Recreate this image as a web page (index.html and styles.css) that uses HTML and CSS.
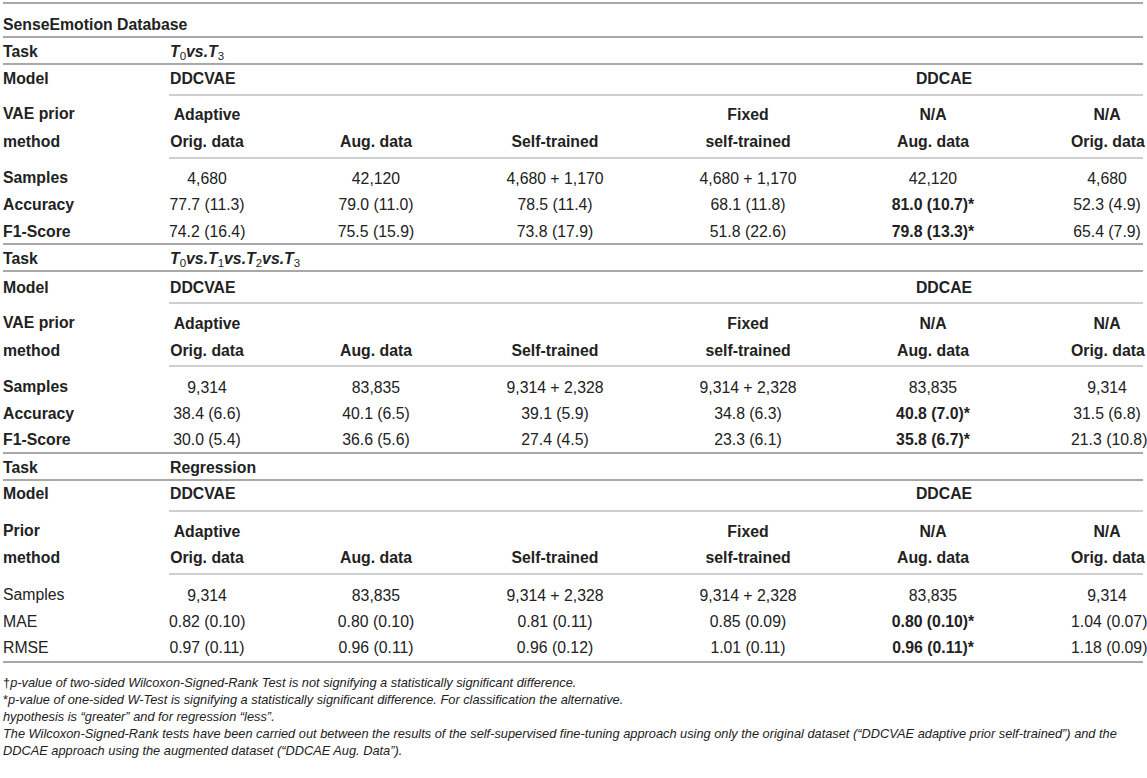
FILE: index.html
```html
<!DOCTYPE html>
<html>
<head>
<meta charset="utf-8">
<link rel="stylesheet" href="styles.css">
</head>
<body>
<div class="page">
<table class="tbl">
  <colgroup>
    <col class="w1"><col class="w2"><col class="w3"><col class="w4"><col class="w5"><col class="w6"><col class="w7">
  </colgroup>
  <tbody>
    <tr class="r-title line"><td colspan="7" class="b">SenseEmotion Database</td></tr>

    <!-- Block 1 -->
    <tr class="r-task line"><td class="b">Task</td><td colspan="6" class="b span"><span class="task"><i>T</i><sub>0</sub><i>vs.T</i><sub>3</sub></span></td></tr>
    <tr class="r-model"><td class="b">Model</td><td colspan="4" class="b span pl">DDCVAE</td><td class="b pl ddcae">DDCAE</td><td class="b pl"></td></tr>
    <tr class="r-prior"><td class="b">VAE prior</td><td class="b c2">Adaptive</td><td class="c3"></td><td class="c4"></td><td class="b c5">Fixed</td><td class="b c6">N/A</td><td class="b c7">N/A</td></tr>
    <tr class="r-method"><td class="b">method</td><td class="b c2 pl">Orig. data</td><td class="b c3 pl">Aug. data</td><td class="b c4 pl">Self-trained</td><td class="b c5 pl">self-trained</td><td class="b c6 pl">Aug. data</td><td class="b c7 pl">Orig. data</td></tr>
    <tr class="r-samples"><td class="b">Samples</td><td class="c2">4,680</td><td class="c3">42,120</td><td class="c4">4,680 + 1,170</td><td class="c5">4,680 + 1,170</td><td class="c6">42,120</td><td class="c7">4,680</td></tr>
    <tr class="r-mid"><td class="b">Accuracy</td><td class="c2">77.7 (11.3)</td><td class="c3">79.0 (11.0)</td><td class="c4">78.5 (11.4)</td><td class="c5">68.1 (11.8)</td><td class="c6 b">81.0 (10.7)*</td><td class="c7">52.3 (4.9)</td></tr>
    <tr class="r-last line"><td class="b">F1-Score</td><td class="c2">74.2 (16.4)</td><td class="c3">75.5 (15.9)</td><td class="c4">73.8 (17.9)</td><td class="c5">51.8 (22.6)</td><td class="c6 b">79.8 (13.3)*</td><td class="c7">65.4 (7.9)</td></tr>

    <!-- Block 2 -->
    <tr class="r-task line"><td class="b">Task</td><td colspan="6" class="b span"><span class="task"><i>T</i><sub>0</sub><i>vs.T</i><sub>1</sub><i>vs.T</i><sub>2</sub><i>vs.T</i><sub>3</sub></span></td></tr>
    <tr class="r-model2"><td class="b">Model</td><td colspan="4" class="b span pl">DDCVAE</td><td class="b pl ddcae">DDCAE</td><td class="b pl"></td></tr>
    <tr class="r-prior2"><td class="b">VAE prior</td><td class="b c2">Adaptive</td><td class="c3"></td><td class="c4"></td><td class="b c5">Fixed</td><td class="b c6">N/A</td><td class="b c7">N/A</td></tr>
    <tr class="r-method2"><td class="b">method</td><td class="b c2 pl">Orig. data</td><td class="b c3 pl">Aug. data</td><td class="b c4 pl">Self-trained</td><td class="b c5 pl">self-trained</td><td class="b c6 pl">Aug. data</td><td class="b c7 pl">Orig. data</td></tr>
    <tr class="r-samples2"><td class="b">Samples</td><td class="c2">9,314</td><td class="c3">83,835</td><td class="c4">9,314 + 2,328</td><td class="c5">9,314 + 2,328</td><td class="c6">83,835</td><td class="c7">9,314</td></tr>
    <tr class="r-mid2"><td class="b">Accuracy</td><td class="c2">38.4 (6.6)</td><td class="c3">40.1 (6.5)</td><td class="c4">39.1 (5.9)</td><td class="c5">34.8 (6.3)</td><td class="c6 b">40.8 (7.0)*</td><td class="c7">31.5 (6.8)</td></tr>
    <tr class="r-last2 line"><td class="b">F1-Score</td><td class="c2">30.0 (5.4)</td><td class="c3">36.6 (5.6)</td><td class="c4">27.4 (4.5)</td><td class="c5">23.3 (6.1)</td><td class="c6 b">35.8 (6.7)*</td><td class="c7">21.3 (10.8)</td></tr>

    <!-- Block 3 -->
    <tr class="r-task3 line"><td class="b">Task</td><td colspan="6" class="b span">Regression</td></tr>
    <tr class="r-model3"><td class="b">Model</td><td colspan="4" class="b span pl">DDCVAE</td><td class="b pl ddcae">DDCAE</td><td class="b pl"></td></tr>
    <tr class="r-prior3"><td class="b">Prior</td><td class="b c2">Adaptive</td><td class="c3"></td><td class="c4"></td><td class="b c5">Fixed</td><td class="b c6">N/A</td><td class="b c7">N/A</td></tr>
    <tr class="r-method3"><td class="b">method</td><td class="b c2 pl">Orig. data</td><td class="b c3 pl">Aug. data</td><td class="b c4 pl">Self-trained</td><td class="b c5 pl">self-trained</td><td class="b c6 pl">Aug. data</td><td class="b c7 pl">Orig. data</td></tr>
    <tr class="r-samples3"><td>Samples</td><td class="c2">9,314</td><td class="c3">83,835</td><td class="c4">9,314 + 2,328</td><td class="c5">9,314 + 2,328</td><td class="c6">83,835</td><td class="c7">9,314</td></tr>
    <tr class="r-mid3"><td>MAE</td><td class="c2">0.82 (0.10)</td><td class="c3">0.80 (0.10)</td><td class="c4">0.81 (0.11)</td><td class="c5">0.85 (0.09)</td><td class="c6 b">0.80 (0.10)*</td><td class="c7">1.04 (0.07)</td></tr>
    <tr class="r-last3 line"><td>RMSE</td><td class="c2">0.97 (0.11)</td><td class="c3">0.96 (0.11)</td><td class="c4">0.96 (0.12)</td><td class="c5">1.01 (0.11)</td><td class="c6 b">0.96 (0.11)*</td><td class="c7">1.18 (0.09)</td></tr>
  </tbody>
</table>
<div class="notes">
  <p><span class="up">†</span><i>p-value of two-sided Wilcoxon-Signed-Rank Test is not signifying a statistically significant difference.</i></p>
  <p><span class="up">*</span><i>p-value of one-sided W-Test is signifying a statistically significant difference. For classification the alternative.</i></p>
  <p><i>hypothesis is “greater” and for regression “less”.</i></p>
  <p><i>The Wilcoxon-Signed-Rank tests have been carried out between the results of the self-supervised fine-tuning approach using only the original dataset (“DDCVAE adaptive prior self-trained”) and the DDCAE approach using the augmented dataset (“DDCAE Aug. Data”).</i></p>
</div>
</div>
</body>
</html>
```
FILE: styles.css
```css
html, body {
  margin: 0;
  padding: 0;
  background: #ffffff;
}

.page {
  padding: 2px 4px 0 3px;
  width: 1140px;
  font-family: "Liberation Sans", Arial, Helvetica, sans-serif;
  color: #222222;
}

.tbl {
  width: 1140px;
  table-layout: fixed;
  border-collapse: collapse;
  border-top: 2px solid #a8a8a8;
  font-size: 15.8px;
}

.w1 { width: 166px; }
.w2 { width: 76px; }
.w3 { width: 235px; }
.w4 { width: 150px; }
.w5 { width: 236px; }
.w6 { width: 134px; }
.w7 { width: 143px; }

.tbl td {
  padding: 0;
  line-height: 20px;
  white-space: nowrap;
  vertical-align: top;
  text-align: left;
}

.b { font-weight: bold; }

.tbl .span { padding-left: 1px; }

.tbl .c2, .tbl .c3, .tbl .c4, .tbl .c5, .tbl .c6, .tbl .c7 { text-align: center; }
.tbl .c3 { padding-left: 27px; }
.tbl .c7 { padding-left: 71px; }
.tbl .ddcae { padding-left: 22px; text-align: center; }

tr.line td { border-bottom: 2px solid #a8a8a8; }
tr td.pl { border-bottom: 2px solid #cfcfcf; }

.task sub {
  font-size: 11.5px;
  font-weight: normal;
  font-style: normal;
  vertical-align: -3px;
  line-height: 0;
}

/* Block 1 rows */
.r-title td { padding-top: 11px; padding-bottom: 1px; }
.r-task td { padding-top: 4px; padding-bottom: 1px; }
.r-model td { padding-top: 4px; padding-bottom: 5px; }
.r-prior td { padding-top: 9px; padding-bottom: 3px; }
.r-method td { padding-top: 4px; padding-bottom: 5px; }
.r-samples td { padding-top: 10px; padding-bottom: 2px; }
.r-mid td { padding-top: 4px; padding-bottom: 2px; }
.r-last td { padding-top: 5px; padding-bottom: 1px; }

/* Block 2 rows */
.r-model2 td { padding-top: 6px; padding-bottom: 4px; }
.r-prior2 td { padding-top: 10px; padding-bottom: 2px; }
.r-method2 td { padding-top: 5px; padding-bottom: 4px; }
.r-samples2 td { padding-top: 11px; padding-bottom: 1px; }
.r-mid2 td { padding-top: 5px; padding-bottom: 1px; }
.r-last2 td { padding-top: 5px; padding-bottom: 2px; }

/* Block 3 rows */
.r-task3 td { padding-top: 4px; padding-bottom: 1px; }
.r-model3 td { padding-top: 3px; padding-bottom: 6px; }
.r-prior3 td { padding-top: 10px; padding-bottom: 3px; }
.r-method3 td { padding-top: 3px; padding-bottom: 5px; }
.r-samples3 td { padding-top: 11px; padding-bottom: 1px; }
.r-mid3 td { padding-top: 5px; padding-bottom: 1px; }
.r-last3 td { padding-top: 5px; padding-bottom: 3px; }

.notes {
  margin-top: 11px;
  font-size: 12.8px;
  line-height: 17px;
  color: #222222;
}

.notes p { margin: 0; }
.notes .up { font-style: normal; }
```
